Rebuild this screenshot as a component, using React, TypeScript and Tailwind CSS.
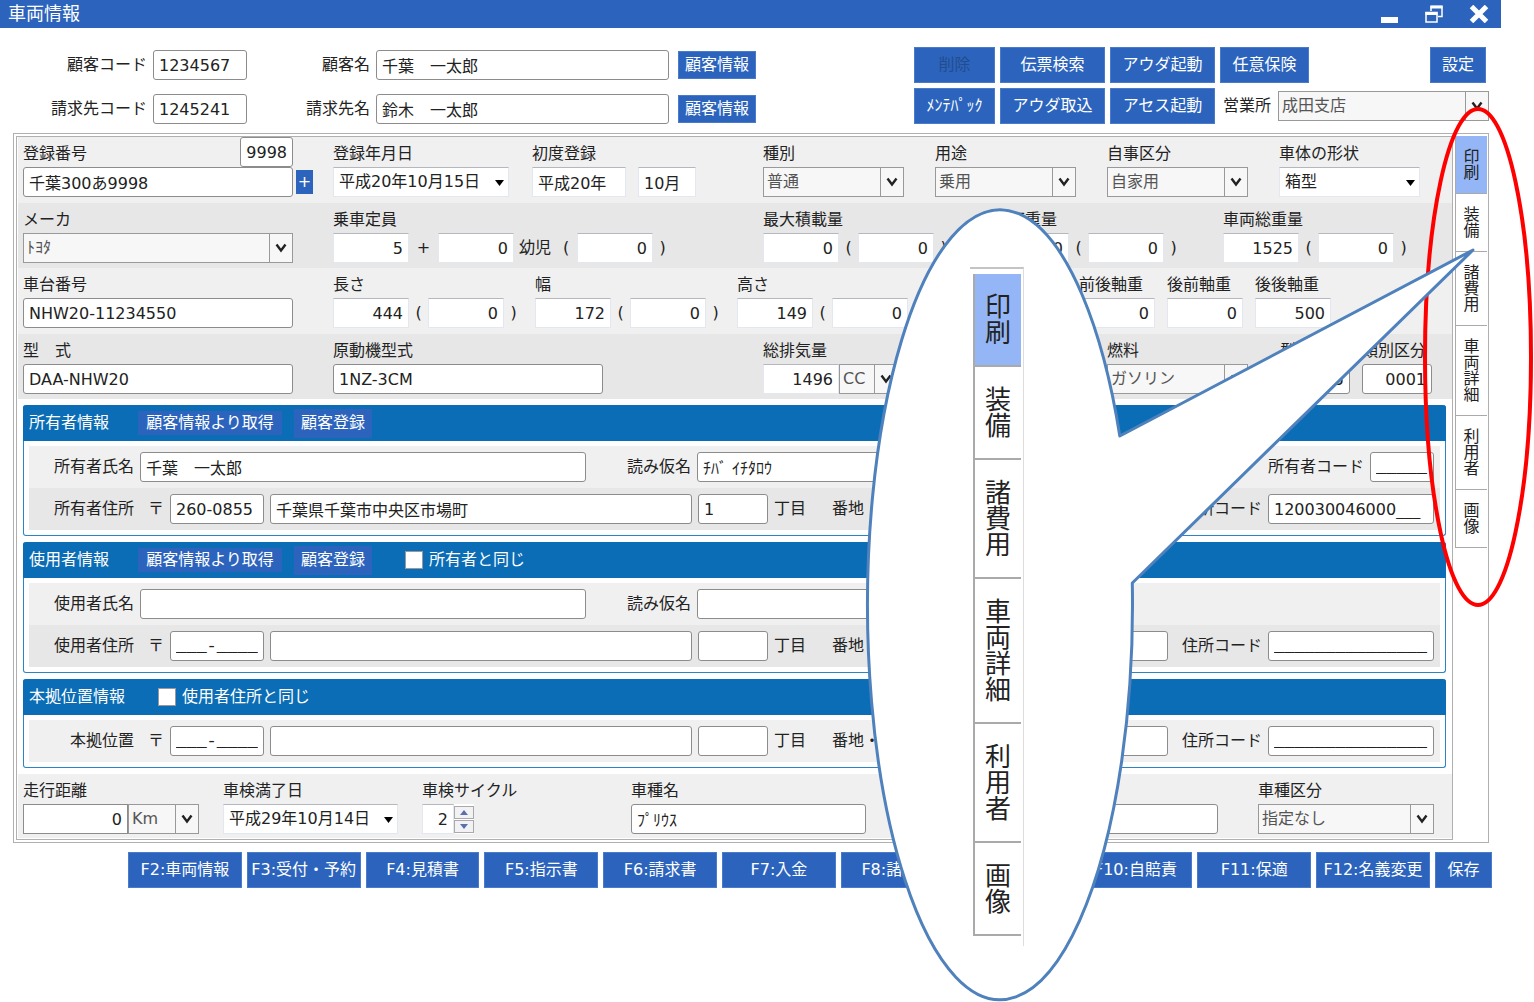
import React from "react";
import clsx from "clsx";

type BoxProps = {
	id?: string;
	label?: string;
	value?: string;
	className?: string;
};

const TextBox = ({ id, label, value = "", className }: BoxProps) => (
	<input
		id={id}
		aria-label={label}
		type="text"
		defaultValue={value}
		className={clsx("h-[30px] rounded-[3px] border border-[#8c8c8c] bg-white px-[5px] text-[#222]", className)}
	/>
);

// postal code and address code masks
const MaskBox = ({ className, ...rest }: BoxProps) => (
	<TextBox {...rest} className={clsx("font-['Liberation_Mono'] text-[17px]", className)} />
);

const NumBox = ({ id, label, value = "0", className }: BoxProps) => (
	<input
		id={id}
		aria-label={label}
		type="text"
		defaultValue={value}
		className={clsx(
			"h-[30px] border border-[#e3e8f0] border-t-[#b4b7bf] bg-white px-[5px] text-[#222]",
			className ?? "w-[76px] text-right"
		)}
	/>
);

const Combo = ({ id, label, value = "", className }: BoxProps) => (
	<span className={clsx("relative flex h-[30px] shrink-0", className)}>
		<select
			id={id}
			aria-label={label}
			className="w-full appearance-none border border-[#999] bg-[#f7f7f7] pl-[3px] text-[#555]"
		>
			<option>{value}</option>
		</select>
		<span className="pointer-events-none absolute inset-y-0 right-0 flex w-6 items-center justify-center border border-[#999]">
			<svg width="12" height="10" viewBox="0 0 12 10" fill="none" stroke="#222" strokeWidth="2.4">
				<path d="M1.5 1.5 6 7.5 10.5 1.5" />
			</svg>
		</span>
	</span>
);

const FlatCombo = ({ id, label, value = "", className }: BoxProps) => (
	<span className={clsx("relative flex h-[30px] shrink-0", className)}>
		<select
			id={id}
			aria-label={label}
			className="w-full appearance-none border border-[#e3e8f0] border-t-[#b4b7bf] bg-white pl-[5px] text-[#222]"
		>
			<option>{value}</option>
		</select>
		<svg
			className="pointer-events-none absolute top-[13px] right-[5px]"
			width="9"
			height="6"
			viewBox="0 0 9 6"
		>
			<path d="M0 0h9L4.5 6z" fill="#000" />
		</svg>
	</span>
);

const Btn = ({ children, label, className }: { children?: React.ReactNode; label?: string; className?: string }) => (
	<button
		type="button"
		aria-label={label}
		className={clsx("shrink-0 border border-[#4a7bcb] bg-[#2c64bd] whitespace-nowrap text-white", className)}
	>
		{children}
	</button>
);

const Row = ({ dark, children }: { dark?: boolean; children: React.ReactNode }) => (
	<div className={clsx("flex pl-[5px]", dark ? "h-[65px] bg-[#e7e7e7]" : "h-[66px] bg-[#f0f0f0]")}>{children}</div>
);

type FieldProps = {
	id: string;
	label?: string;
	className: string;
	children: React.ReactNode;
};

const Field = ({ id, label, className, children }: FieldProps) => (
	<div className={clsx("shrink-0", className)}>
		<label htmlFor={id} className="flex h-[30px] items-center pt-[3px] whitespace-nowrap">
			{label}
		</label>
		<div className="flex items-center">{children}</div>
	</div>
);

const NumPair = ({ id, label, value }: { id: string; label: string; value: string }) => (
	<>
		<NumBox id={id} value={value} />
		<span className="w-[19px] text-center">(</span>
		<NumBox label={`${label} 2`} />
		<span className="w-[19px] text-center">)</span>
	</>
);

const Section = ({ title, tools, children }: { title: string; tools: React.ReactNode; children: React.ReactNode }) => (
	<section className="mx-[6px] mb-[6px] rounded-[3px] border border-t-0 border-[#2b84c6] bg-white">
		<div className="-mx-px flex h-[36px] items-center rounded-t-[3px] bg-[#0b6db5] pl-[6px] text-white">
			<h2>{title}</h2>
			{tools}
		</div>
		<div className="mx-[5px] mt-[5px] mb-[5px]">{children}</div>
	</section>
);

const SectionRow = ({ dark, children }: { dark?: boolean; children: React.ReactNode }) => (
	<div className={clsx("flex h-[42px] items-center gap-[6px] pr-[6px]", dark ? "bg-[#e7e7e7]" : "bg-[#f0f0f0]")}>
		{children}
	</div>
);

const CustomerTools = () => (
	<>
		<button type="button" className="ml-[29px] h-[24px] w-[144px] bg-[#2c64bd] leading-6">
			顧客情報より取得
		</button>
		<button type="button" className="ml-[12px] h-[29px] w-[78px] bg-[#2c64bd]">
			顧客登録
		</button>
	</>
);

const Check = ({ label }: { label: string }) => (
	<label className="ml-[33px] flex items-center gap-[6px]">
		<input type="checkbox" className="size-[18px] appearance-none border border-[#999] bg-white" />
		{label}
	</label>
);

const NameRow = ({ id, label, name, kana, code }: { id: string; label: string; name?: string; kana?: string; code?: boolean }) => (
	<SectionRow>
		<label htmlFor={`${id}-name`} className="w-[105px] text-right">
			{label}
		</label>
		<TextBox id={`${id}-name`} value={name} className="w-[446px]" />
		<label htmlFor={`${id}-kana`} className="w-[99px] text-right">
			読み仮名
		</label>
		<TextBox id={`${id}-kana`} value={kana} className={code ? "w-[469px]" : "w-[400px]"} />
		{code && (
			<div className="ml-auto flex items-center gap-[6px]">
				<label htmlFor={`${id}-code`}>所有者コード</label>
				<MaskBox id={`${id}-code`} value="_____" className="w-[64px]" />
			</div>
		)}
	</SectionRow>
);

type AddressProps = {
	id: string;
	label: string;
	dark?: boolean;
	zip?: string;
	town?: string;
	block?: string;
	code?: string;
};

const AddressRow = ({ id, label, dark, zip, town, block, code }: AddressProps) => (
	<SectionRow dark={dark}>
		<label htmlFor={`${id}-zip`} className="w-[105px] text-right">
			{label}
		</label>
		<span className="w-[24px] text-right">〒</span>
		{zip ? (
			<TextBox id={`${id}-zip`} value={zip} className="w-[94px] shrink-0" />
		) : (
			<MaskBox id={`${id}-zip`} value="___-____" className="w-[94px] shrink-0" />
		)}
		<TextBox label={`${id} 町名`} value={town} className="w-[422px] shrink-0" />
		<TextBox id={`${id}-block`} value={block} className="w-[70px] shrink-0" />
		<label htmlFor={`${id}-block`} className="shrink-0">
			丁目
		</label>
		<label htmlFor={`${id}-lot`} className="ml-5 shrink-0">
			番地・号
		</label>
		<TextBox id={`${id}-lot`} className="min-w-0 flex-1" />
		<label htmlFor={`${id}-addr`} className="ml-2 shrink-0">
			住所コード
		</label>
		{code ? (
			<TextBox id={`${id}-addr`} value={code} className="w-[166px] shrink-0" />
		) : (
			<MaskBox id={`${id}-addr`} value="_______________" className="w-[166px] shrink-0" />
		)}
	</SectionRow>
);

const tabs = ["印刷", "装備", "諸費用", "車両詳細", "利用者", "画像"];

const functionKeys = [
	"F2:車両情報",
	"F3:受付・予約",
	"F4:見積書",
	"F5:指示書",
	"F6:請求書",
	"F7:入金",
	"F8:諸費用",
	"",
	"F10:自賠責",
	"F11:保適",
	"F12:名義変更",
];

const TitleBar = () => (
	<header className="flex h-[28px] items-center bg-[#2c64bd] pr-3 pl-2 text-white">
		<h1 className="flex-1 text-[18px] leading-7">車両情報</h1>
		<button type="button" aria-label="最小化" className="mr-[27px]">
			<svg width="17" height="20" viewBox="0 0 17 20">
				<path d="M0 13h17v6H0z" fill="#fff" />
			</svg>
		</button>
		<button type="button" aria-label="元に戻す" className="mr-[26px]">
			<svg width="18" height="18" viewBox="0 0 18 18" fill="none" stroke="#fff">
				<path d="M6 6V1.5h11v10h-4" strokeWidth="1.5" />
				<path d="M5.5 2h12" strokeWidth="3" />
				<path d="M1 7.5h11v9.5H1z" strokeWidth="1.5" />
				<path d="M.5 8.5h12" strokeWidth="3" />
			</svg>
		</button>
		<button type="button" aria-label="閉じる">
			<svg width="20" height="18" viewBox="0 0 20 18" stroke="#fff" strokeWidth="5">
				<path d="M2.5 1.5 17.5 16.5M17.5 1.5 2.5 16.5" />
			</svg>
		</button>
	</header>
);

const CustomerHeader = () => (
	<div className="flex h-[105px] items-start justify-between pr-3">
		<div className="flex flex-col gap-[14px] pt-[22px]">
			{[
				["cust", "顧客コード", "1234567", "顧客名", "千葉　一太郎"],
				["bill", "請求先コード", "1245241", "請求先名", "鈴木　一太郎"],
			].map(([id, codeLabel, code, nameLabel, name]) => (
				<div key={id} className="flex items-center gap-[6px]">
					<label htmlFor={`${id}-code`} className="w-[147px] text-right">
						{codeLabel}
					</label>
					<TextBox id={`${id}-code`} value={code} className="w-[94px]" />
					<label htmlFor={`${id}-name`} className="w-[117px] text-right">
						{nameLabel}
					</label>
					<TextBox id={`${id}-name`} value={name} className="w-[293px]" />
					<Btn className="ml-[3px] h-[28px] w-[78px]">顧客情報</Btn>
				</div>
			))}
		</div>
		<div className="flex flex-col gap-[5px] pt-[19px]">
			<div className="flex h-[36px] gap-[5px]">
				<button type="button" disabled className="w-[81px] border border-[#4a7bcb] bg-[#2c64bd] text-[#234c8e]">
					削除
				</button>
				<Btn className="w-[105px]">伝票検索</Btn>
				<Btn className="w-[105px]">アウダ起動</Btn>
				<Btn className="w-[89px]">任意保険</Btn>
				<Btn className="mr-[3px] ml-auto w-[56px]">設定</Btn>
			</div>
			<div className="flex h-[36px] items-center gap-[5px]">
				<Btn className="h-full w-[81px]">ﾒﾝﾃﾊﾟｯｸ</Btn>
				<Btn className="h-full w-[105px]">アウダ取込</Btn>
				<Btn className="h-full w-[105px]">アセス起動</Btn>
				<label htmlFor="office" className="ml-[3px]">
					営業所
				</label>
				<Combo id="office" value="成田支店" className="ml-[2px] w-[211px]" />
			</div>
		</div>
	</div>
);

const VehicleRows = () => (
	<>
		<Row>
			<div className="w-[310px] shrink-0">
				<div className="flex h-[30px] w-[270px] items-center justify-between">
					<label htmlFor="plate" className="pt-[3px]">
						登録番号
					</label>
					<TextBox label="一連番号" value="9998" className="w-[53px] text-right" />
				</div>
				<div className="flex items-center gap-[3px]">
					<TextBox id="plate" value="千葉300あ9998" className="w-[270px]" />
					<button type="button" className="h-[24px] w-[17px] bg-[#2c64bd] leading-5 text-white">
						+
					</button>
				</div>
			</div>
			<Field id="regdate" label="登録年月日" className="w-[199px]">
				<FlatCombo id="regdate" value="平成20年10月15日" className="w-[176px]" />
			</Field>
			<Field id="first" label="初度登録" className="w-[231px]">
				<NumBox id="first" value="平成20年" className="w-[94px]" />
				<NumBox label="初度登録 月" value="10月" className="ml-3 w-[58px]" />
			</Field>
			<Field id="kind" label="種別" className="w-[172px]">
				<Combo id="kind" value="普通" className="w-[141px]" />
			</Field>
			<Field id="use" label="用途" className="w-[172px]">
				<Combo id="use" value="乗用" className="w-[141px]" />
			</Field>
			<Field id="owner-type" label="自事区分" className="w-[172px]">
				<Combo id="owner-type" value="自家用" className="w-[141px]" />
			</Field>
			<Field id="body" label="車体の形状" className="w-[141px]">
				<FlatCombo id="body" value="箱型" className="w-[141px]" />
			</Field>
		</Row>
		<Row dark>
			<Field id="maker" label="メーカ" className="w-[310px]">
				<Combo id="maker" value="ﾄﾖﾀ" className="w-[270px]" />
			</Field>
			<Field id="seats" label="乗車定員" className="w-[430px]">
				<NumBox id="seats" value="5" />
				<span className="w-[29px] text-center">+</span>
				<NumBox label="乗車定員 2" />
				<span className="ml-[5px] w-[44px]">幼児</span>
				<span className="w-[14px]">(</span>
				<NumBox label="幼児" />
				<span className="w-[19px] text-center">)</span>
			</Field>
			<Field id="load" label="最大積載量" className="w-[230px]">
				<NumPair id="load" label="最大積載量" value="0" />
			</Field>
			<Field id="weight" label="車両重量" className="w-[230px]">
				<NumPair id="weight" label="車両重量" value="0" />
			</Field>
			<Field id="gross" label="車両総重量" className="w-[190px]">
				<NumPair id="gross" label="車両総重量" value="1525" />
			</Field>
		</Row>
		<Row>
			<Field id="chassis" label="車台番号" className="w-[310px]">
				<TextBox id="chassis" value="NHW20-11234550" className="w-[270px]" />
			</Field>
			<Field id="length" label="長さ" className="w-[202px]">
				<NumPair id="length" label="長さ" value="444" />
			</Field>
			<Field id="width" label="幅" className="w-[202px]">
				<NumPair id="width" label="幅" value="172" />
			</Field>
			<Field id="height" label="高さ" className="w-[342px]">
				<NumPair id="height" label="高さ" value="149" />
			</Field>
			<Field id="axle-fr" label="前後軸重" className="w-[88px]">
				<NumBox id="axle-fr" />
			</Field>
			<Field id="axle-rf" label="後前軸重" className="w-[88px]">
				<NumBox id="axle-rf" />
			</Field>
			<Field id="axle-rr" label="後後軸重" className="w-[88px]">
				<NumBox id="axle-rr" value="500" />
			</Field>
		</Row>
		<Row dark>
			<Field id="model" label="型　式" className="w-[310px]">
				<TextBox id="model" value="DAA-NHW20" className="w-[270px]" />
			</Field>
			<Field id="engine" label="原動機型式" className="w-[430px]">
				<TextBox id="engine" value="1NZ-3CM" className="w-[270px]" />
			</Field>
			<Field id="cc" label="総排気量" className="w-[344px]">
				<NumBox id="cc" value="1496" />
				<Combo label="総排気量 単位" value="CC" className="w-[59px]" />
			</Field>
			<Field id="fuel" label="燃料" className="w-[173px]">
				<Combo id="fuel" value="ガソリン" className="w-[141px]" />
			</Field>
			<Field id="type-no" label="型式指定" className="w-[82px]">
				<TextBox id="type-no" value="12345" className="w-[70px] text-right" />
			</Field>
			<Field id="class-no" label="類別区分" className="w-[70px]">
				<TextBox id="class-no" value="0001" className="w-[70px] text-right" />
			</Field>
		</Row>
	</>
);

const InspectionRow = () => (
	<div className="flex h-[64px] bg-[#f0f0f0] pl-[5px]">
		<Field id="mileage" label="走行距離" className="w-[200px]">
			<TextBox id="mileage" value="0" className="w-[105px] rounded-none text-right" />
			<Combo label="走行距離 単位" value="Km" className="w-[71px]" />
		</Field>
		<Field id="expiry" label="車検満了日" className="w-[199px]">
			<FlatCombo id="expiry" value="平成29年10月14日" className="w-[175px]" />
		</Field>
		<Field id="cycle" label="車検サイクル" className="w-[209px]">
			<NumBox id="cycle" value="2" className="w-[32px] text-right" />
			<div className="flex h-[30px] w-[20px] flex-col justify-center gap-px bg-white">
				<button type="button" aria-label="増やす" className="flex h-[13px] items-center justify-center border border-[#aaa] bg-[#f2f2f4]">
					<svg width="8" height="5" viewBox="0 0 8 5">
						<path d="M4 0l4 5H0z" fill="#5b6fae" />
					</svg>
				</button>
				<button type="button" aria-label="減らす" className="flex h-[13px] items-center justify-center border border-[#aaa] bg-[#f2f2f4]">
					<svg width="8" height="5" viewBox="0 0 8 5">
						<path d="M0 0h8L4 5z" fill="#5b6fae" />
					</svg>
				</button>
			</div>
		</Field>
		<Field id="car-name" label="車種名" className="w-[352px]">
			<TextBox id="car-name" value="ﾌﾟﾘｳｽ" className="w-[235px]" />
		</Field>
		<Field id="grade" className="w-[275px]">
			<TextBox id="grade" label="グレード" className="w-[235px]" />
		</Field>
		<Field id="car-class" label="車種区分" className="w-[176px]">
			<Combo id="car-class" value="指定なし" className="w-[176px]" />
		</Field>
	</div>
);

const SideTabs = () => (
	<nav className="ml-[2px] flex w-[32px] flex-col">
		{tabs.map((tab, i) => (
			<button
				key={tab}
				type="button"
				className={clsx(
					"flex justify-center border-b border-l border-[#aaa] pt-[13px] pb-3 leading-4",
					i === 0 ? "bg-[#94b6f6]" : "bg-white"
				)}
			>
				<span className="w-4 break-all">{tab}</span>
			</button>
		))}
	</nav>
);

// enlarged copy of the side tabs inside the speech balloon
const Callout = () => (
	<>
		<svg
			className="pointer-events-none absolute top-0 left-0"
			width="1534"
			height="1002"
			viewBox="0 0 1534 1002"
			strokeLinejoin="round"
		>
			<ellipse cx="1478" cy="357" rx="53" ry="248" fill="none" stroke="#f00" strokeWidth="4" />
			<path
				d="M1132.3 583A132.5 395 0 1 1 1119.8 436L1473 250Z"
				fill="#fff"
				stroke="#4f81bd"
				strokeWidth="3"
			/>
		</svg>
		<div className="absolute top-[267px] left-[970px] h-[679px] w-[54px] border-t-2 border-r border-t-[#c4c4c4] border-r-[#ddd] pt-[5px] pr-[2px] pl-[3px]">
			{tabs.map((tab, i) => (
				<div
					key={tab}
					className={clsx(
						"flex justify-center border-b-2 border-l-2 border-[#aaa] pt-[20px] pb-[19px] text-[26px] leading-[26px]",
						i === 0 ? "bg-[#94b6f6]" : "bg-white"
					)}
				>
					<span className="w-[26px] break-all">{tab}</span>
				</div>
			))}
		</div>
	</>
);

const App = () => {
	return (
		<div className="relative min-h-screen overflow-hidden bg-white font-['DejaVu_Sans','Noto_Sans_CJK_JP',sans-serif] text-[16px] leading-6 text-[#222]">
			<div className="mr-[33px]">
				<TitleBar />
				<CustomerHeader />
				<main className="mr-3 ml-[13px] flex border border-[#b0b0b0] p-[2px] pr-px">
					<div className="min-w-0 flex-1 border border-[#b0b0b0] pb-px">
						<div className="mb-[6px] ml-px">
							<VehicleRows />
						</div>
						<Section title="所有者情報" tools={<CustomerTools />}>
							<NameRow id="owner" label="所有者氏名" name="千葉　一太郎" kana="ﾁﾊﾞ ｲﾁﾀﾛｳ" code />
							<AddressRow
								id="owner"
								label="所有者住所"
								dark
								zip="260-0855"
								town="千葉県千葉市中央区市場町"
								block="1"
								code="120030046000___"
							/>
						</Section>
						<Section
							title="使用者情報"
							tools={
								<>
									<CustomerTools />
									<Check label="所有者と同じ" />
								</>
							}
						>
							<NameRow id="user" label="使用者氏名" />
							<AddressRow id="user" label="使用者住所" dark />
						</Section>
						<Section title="本拠位置情報" tools={<Check label="使用者住所と同じ" />}>
							<AddressRow id="base" label="本拠位置" />
						</Section>
						<div className="ml-px">
							<InspectionRow />
						</div>
					</div>
					<SideTabs />
				</main>
			</div>
			<footer className="mt-[9px] mr-[42px] ml-[128px] flex h-[36px] gap-[5px]">
				{functionKeys.map((key) => (
					<Btn key={key} label={key || "F9"} className="min-w-0 flex-1 shrink">
						{key}
					</Btn>
				))}
				<Btn className="w-[57px]">保存</Btn>
			</footer>
			<Callout />
		</div>
	);
};

export default App;
